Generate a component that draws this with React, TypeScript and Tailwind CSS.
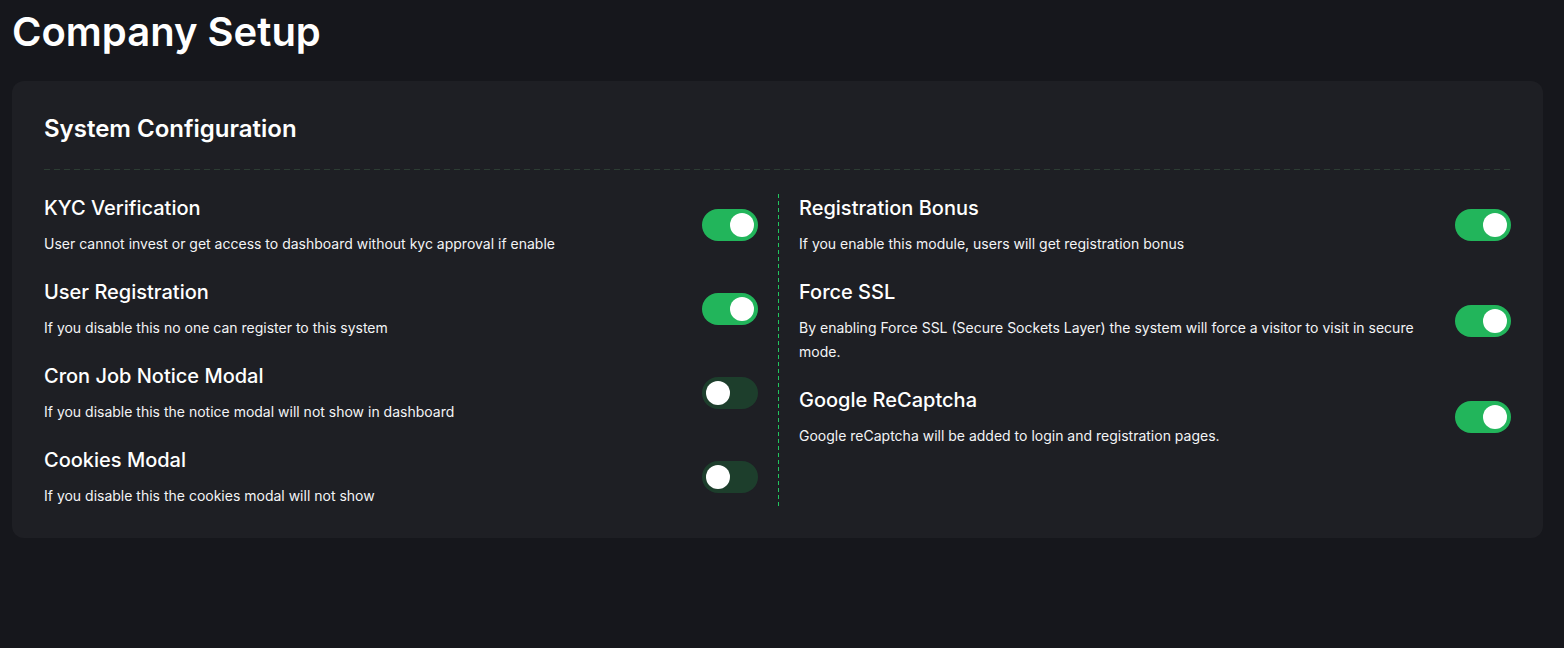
import { useState } from 'react';

type Setting = { title: string; desc: string; on: boolean };

const leftSettings: Setting[] = [
    { title: 'KYC Verification', desc: 'User cannot invest or get access to dashboard without kyc approval if enable', on: true },
    { title: 'User Registration', desc: 'If you disable this no one can register to this system', on: true },
    { title: 'Cron Job Notice Modal', desc: 'If you disable this the notice modal will not show in dashboard', on: false },
    { title: 'Cookies Modal', desc: 'If you disable this the cookies modal will not show', on: false },
];

const rightSettings: Setting[] = [
    { title: 'Registration Bonus', desc: 'If you enable this module, users will get registration bonus', on: true },
    { title: 'Force SSL', desc: 'By enabling Force SSL (Secure Sockets Layer) the system will force a visitor to visit in secure mode.', on: true },
    { title: 'Google ReCaptcha', desc: 'Google reCaptcha will be added to login and registration pages.', on: true },
];

function Toggle({ initial }: { initial: boolean }) {
    const [on, setOn] = useState(initial);
    return (
        <button
            onClick={() => setOn(!on)}
            className={`flex h-8 w-14 shrink-0 items-center rounded-full p-1 ${on ? 'justify-end bg-[#22b55b]' : 'justify-start bg-[#1d3e2c]'}`}
        >
            <span className="h-6 w-6 rounded-full bg-white" />
        </button>
    );
}

function SettingRow({ item }: { item: Setting }) {
    return (
        <div className="flex items-center gap-6">
            <div className="flex-1">
                <div className="text-[20px] leading-7 font-medium text-white">{item.title}</div>
                <div className="mt-2.5 text-[14px] leading-6 text-[#f3f4f6]">{item.desc}</div>
            </div>
            <Toggle initial={item.on} />
        </div>
    );
}

export default function App() {
    return (
        <div className="min-h-screen bg-[#16171c] pl-3 pr-[21px] pb-10 text-white" style={{ fontFamily: 'Inter, "Noto Sans", sans-serif' }}>
            <h1 className="text-[40px] leading-[48px] font-semibold pt-2 mb-[25px]">Company Setup</h1>

            <div className="rounded-xl bg-[#1e1f24] px-8 pt-8 pb-[30px]">
                <h2 className="text-[24px] leading-8 font-semibold">System Configuration</h2>
                <div className="mt-6 mb-6 h-px bg-[repeating-linear-gradient(to_right,#2c3d33_0_6px,transparent_6px_10px)]" />

                <div className="grid grid-cols-[734px_1px_1fr]">
                    <div className="flex flex-col gap-[22px] pr-5">
                        {leftSettings.map((item, i) => (
                            <SettingRow key={i} item={item} />
                        ))}
                    </div>
                    <div className="bg-[repeating-linear-gradient(to_bottom,#22c55e_0_4px,transparent_4px_7px)]" />
                    <div className="flex flex-col gap-[22px] pl-5">
                        {rightSettings.map((item, i) => (
                            <SettingRow key={i} item={item} />
                        ))}
                    </div>
                </div>
            </div>
        </div>
    );
}
